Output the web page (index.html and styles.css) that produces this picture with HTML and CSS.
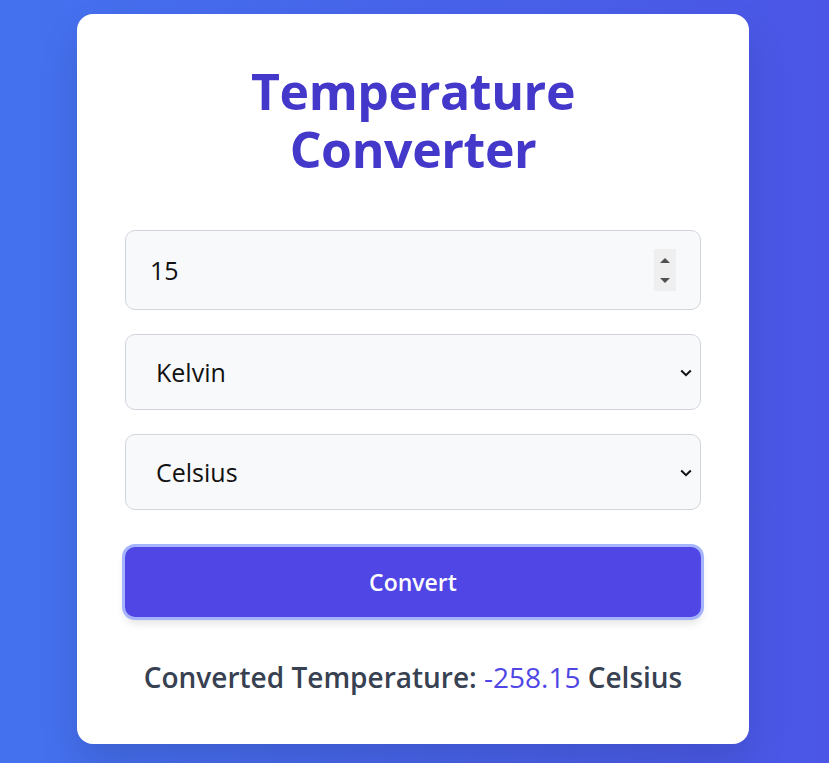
FILE: index.html
```
<!DOCTYPE html>
<html lang="en">
<head>
<meta charset="utf-8">
<title>Temperature Converter</title>
<link rel="stylesheet" href="styles.css">
</head>
<body>
<main class="page">
  <section class="card">
    <h1 class="title">Temperature Converter</h1>
    <div class="form">
      <div class="field">
        <input class="control number" type="number" value="15">
        <span class="spinner" aria-hidden="true">
          <svg width="22" height="42" viewBox="0 0 22 42"><path d="M6 14 L11 9 L16 14 Z" fill="#505050"/><path d="M6 29 L16 29 L11 34 Z" fill="#505050"/></svg>
        </span>
      </div>
      <div class="field">
        <select class="control select"><option>Kelvin</option><option>Celsius</option><option>Fahrenheit</option></select>
        <svg class="chevron" width="12" height="8" viewBox="0 0 12 8" aria-hidden="true"><path d="M1.2 1.5 L6 6.2 L10.8 1.5" fill="none" stroke="#111" stroke-width="2"/></svg>
      </div>
      <div class="field">
        <select class="control select"><option>Celsius</option><option>Kelvin</option><option>Fahrenheit</option></select>
        <svg class="chevron" width="12" height="8" viewBox="0 0 12 8" aria-hidden="true"><path d="M1.2 1.5 L6 6.2 L10.8 1.5" fill="none" stroke="#111" stroke-width="2"/></svg>
      </div>
      <button class="convert" type="button">Convert</button>
    </div>
    <p class="result">Converted Temperature: <span class="value">-258.15</span> Celsius</p>
  </section>
</main>
</body>
</html>
```
FILE: styles.css
```
* { box-sizing: border-box; }
html, body { margin: 0; height: 100%; }
body {
  font-family: "Open Sans", "Noto Sans", sans-serif;
  background: linear-gradient(to right, #4472ef, #4b56e6);
}
.page {
  min-height: 100%;
  display: flex;
  justify-content: center;
  align-items: flex-start;
  padding-top: 14px;
  padding-right: 3px;
}
.card {
  width: 672px;
  background: #fff;
  border-radius: 16px;
  padding: 48px 48px 48px;
  box-shadow: 0 20px 40px rgba(0,0,0,0.12);
}
.title {
  max-width: 460px;
  margin: 0 auto 52px;
  text-align: center;
  color: #4338ca;
  font-size: 50px;
  font-weight: 700;
  line-height: 58px;
  letter-spacing: -0.4px;
}
.form {
  display: flex;
  flex-direction: column;
  gap: 24px;
}
.field { position: relative; }
.control {
  width: 100%;
  display: block;
  border: 1px solid #d1d5db;
  border-radius: 10px;
  background: #f8f9fb;
  font-family: inherit;
  font-size: 25px;
  color: #111;
  outline: none;
}
.number {
  height: 80px;
  padding: 0 24px;
  -moz-appearance: textfield;
  appearance: textfield;
}
.number::-webkit-inner-spin-button,
.number::-webkit-outer-spin-button { -webkit-appearance: none; margin: 0; }
.spinner {
  position: absolute;
  right: 25px;
  top: 19px;
  width: 22px;
  height: 42px;
  background: #efefef;
  display: block;
}
.spinner svg { display: block; }
.select {
  height: 76px;
  padding: 0 30px;
  -webkit-appearance: none;
  appearance: none;
}
.chevron {
  position: absolute;
  right: 9px;
  top: 35px;
}
.convert {
  margin-top: 13px;
  height: 70px;
  width: 100%;
  border: none;
  border-radius: 10px;
  background: #4f46e5;
  color: #fff;
  font-family: inherit;
  font-size: 23px;
  font-weight: 600;
  box-shadow: 0 0 0 3px #a5b4fc, 0 6px 10px rgba(0,0,0,0.12);
}
.result {
  margin: 41px 0 0;
  text-align: center;
  color: #374151;
  font-size: 28px;
  font-weight: 600;
  line-height: 38px;
}
.value { color: #4f46e5; font-weight: 500; }
```
